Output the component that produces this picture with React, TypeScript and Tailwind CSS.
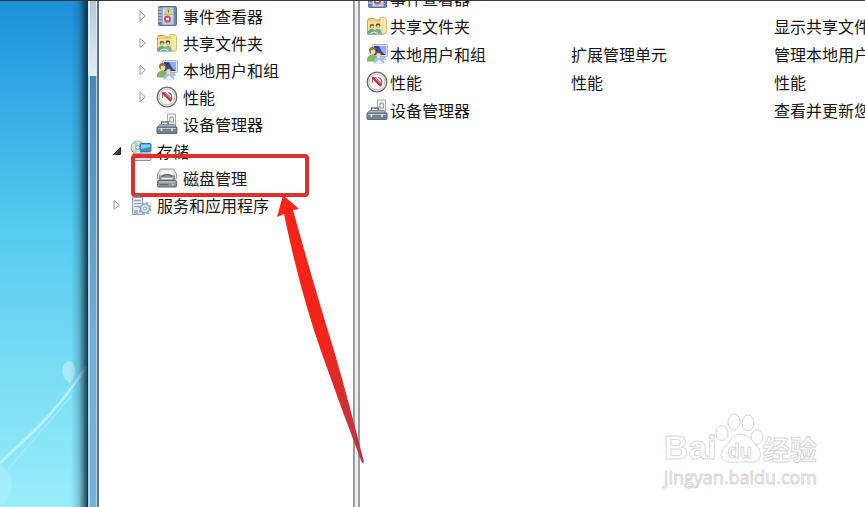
import type {ReactNode} from "react";

type IconName = "event" | "share" | "users" | "perf" | "device" | "storage" | "disk" | "services";

const treeRows: { label: string; icon: IconName; depth: number; state?: "open" | "closed"; marked?: boolean }[] = [
    {label: "事件查看器", icon: "event", depth: 2, state: "closed"},
    {label: "共享文件夹", icon: "share", depth: 2, state: "closed"},
    {label: "本地用户和组", icon: "users", depth: 2, state: "closed"},
    {label: "性能", icon: "perf", depth: 2, state: "closed"},
    {label: "设备管理器", icon: "device", depth: 2},
    {label: "存储", icon: "storage", depth: 1, state: "open"},
    {label: "磁盘管理", icon: "disk", depth: 2, marked: true},
    {label: "服务和应用程序", icon: "services", depth: 1, state: "closed"},
];

const listRows: { name: string; icon: IconName; type: string; description: string }[] = [
    {name: "事件查看器", icon: "event", type: "", description: ""},
    {name: "共享文件夹", icon: "share", type: "", description: "显示共享文件夹"},
    {name: "本地用户和组", icon: "users", type: "扩展管理单元", description: "管理本地用户和组"},
    {name: "性能", icon: "perf", type: "性能", description: "性能"},
    {name: "设备管理器", icon: "device", type: "", description: "查看并更新您的设备"},
];

const drawings: Record<IconName, ReactNode> = {
    event: (
        <>
            <rect x="2.5" y="1.5" width="18" height="19" rx="1" fill="#6f86b4" stroke="#5b6d96"/>
            <rect x="6.5" y="2.5" width="11" height="17" fill="#d3dae4"/>
            <path d="M8 4h9M8 16h9M8 18h9" stroke="#a9b7cb"/>
            <path d="M2 4h4M2 7h4M2 10h4M2 13h4M2 16h4" stroke="#d8dfeb"/>
            <path d="M12.500 3l4 6.500h-8z" fill="#ecd965" stroke="#bda94a" strokeWidth=".7"/>
            <path d="M12.500 5v2.600" stroke="#6f7c33"/>
            <circle cx="11.500" cy="14" r="3.500" fill="#cb4f60"/>
            <path d="M10.300 12.800l2.400 2.400m0-2.400l-2.400 2.400" stroke="#fff" strokeWidth="1.200"/>
        </>
    ),
    share: (
        <>
            <path d="M1.500 5.500l1-2h6l2 1.500h8v14h-17z" fill="#ecd084" stroke="#c6a556"/>
            <path d="M14 2.500h5l1.500 2v14l-6.500 1z" fill="#f8e7ae" stroke="#cfb062" strokeWidth=".8"/>
            <path d="M2 7h15v11H2z" fill="#f6e09a"/>
            <circle cx="6" cy="11" r="2.300" fill="#7a6338"/>
            <circle cx="6.200" cy="12" r="1.500" fill="#edd0a5"/>
            <circle cx="12" cy="10.500" r="2.300" fill="#54523a"/>
            <circle cx="12" cy="11.600" r="1.500" fill="#edd0a5"/>
            <path d="M1.500 19.500c0-4 2-5.500 4.500-5.500s3.500 1.500 4 5.500z" fill="#5fae78"/>
            <path d="M8 19.500c0-4 1.500-6 4-6s3.500 2 4 6z" fill="#78b3a5"/>
            <path d="M4 18.500l4-1.500 4 1.500" stroke="#e4f5ea" fill="none"/>
        </>
    ),
    users: (
        <>
            <rect x="6.500" y="1.500" width="15" height="12" rx="1" fill="#dfe6f2" stroke="#a3b1cb"/>
            <rect x="8" y="3" width="12" height="9" fill="#2f439f"/>
            <path d="M13 3h7v9l-4-3z" fill="#93aee5"/>
            <path d="M14 14h5l1 3h-6z" fill="#b4bfce"/>
            <circle cx="6.500" cy="7.500" r="3.400" fill="#8d7340"/>
            <circle cx="7" cy="9" r="2.400" fill="#eed5ac"/>
            <path d="M.8 18.500c0-5 2.500-7 5.700-7s5 2.500 5 7z" fill="#7fb85e"/>
            <circle cx="12.500" cy="11" r="3" fill="#5c5546"/>
            <circle cx="12.500" cy="12.300" r="2.300" fill="#f0d6b9"/>
            <path d="M7.500 20.500c0-4 2-6 5-6s6 2 6 6z" fill="#a7c2e0"/>
            <path d="M8.500 20.500l4.500-4 4.500 4z" fill="#e6eef8"/>
        </>
    ),
    perf: (
        <>
            <circle cx="11" cy="11" r="9.800" fill="#e9e7e7" stroke="#6e6969" strokeWidth="1.300"/>
            <circle cx="11" cy="11" r="7.800" fill="#fff" stroke="#c0bcbc" strokeWidth=".8"/>
            <path d="M6.500 12V6.500h3l6.500 7" fill="none" stroke="#c9626b" strokeWidth="1.200"/>
            <path d="M6.500 6.500l8.500 8.500" stroke="#b52f3b" strokeWidth="2.200"/>
            <path d="M12 6.500c3 .5 4.500 3 3.500 7.500" fill="none" stroke="#a5535a" strokeWidth="1.200"/>
        </>
    ),
    device: (
        <>
            <rect x="11.500" y="1" width="8" height="12" fill="#f1f3ee" stroke="#a9aea7"/>
            <path d="M14 9V5.500c0-2.200 3.500-2.200 3.500 0V9z" fill="none" stroke="#8fa58a" strokeWidth="1.100"/>
            <path d="M5.500 11.500V9h7v2.500" fill="none" stroke="#687580" strokeWidth="1.300"/>
            <path d="M3.500 11.500h15l2.500 3H1z" fill="#a9b4bd" stroke="#7c8993"/>
            <rect x="1" y="14" width="20" height="6.500" rx="1" fill="#76838e" stroke="#5f6b75"/>
            <path d="M2 15.500h18" stroke="#bdc7ce"/>
            <path d="M5.500 15v3M16 15v3" stroke="#dfe5e8" strokeWidth="1.600"/>
        </>
    ),
    storage: (
        <>
            <rect x="3" y="13" width="18" height="7.500" rx="1" fill="#dcdee1" stroke="#8d9196"/>
            <path d="M4.500 17h10" stroke="#8f969c"/>
            <circle cx="18" cy="17" r="1.300" fill="#67ae6c"/>
            <circle cx="7.500" cy="7.500" r="6.500" fill="#dde2e2" stroke="#98a3a1"/>
            <path d="M7.500 7.500L3 3l4-2zM7.500 7.500l-1 6-4-2z" fill="#b5d0b9"/>
            <circle cx="7.500" cy="7.500" r="2" fill="#fff" stroke="#949b9b"/>
            <rect x="10" y="3.500" width="11" height="8" rx="1" fill="#3593c6" stroke="#2b7aa9"/>
            <path d="M11 4.500h9v2.500l-9 2z" fill="#85cdea"/>
            <path d="M14 12v3h4v-3" fill="#aab8c4"/>
        </>
    ),
    disk: (
        <>
            <path d="M4.500 2h13l3 5v5h-19V7z" fill="#dcdddd" stroke="#9b9e9f"/>
            <path d="M6 3.500h10l1.500 4h-13z" fill="#f4f4f4"/>
            <path d="M3 8.500h16v4.500H3z" fill="#8c9092"/>
            <path d="M6 9.500c2-2.500 8-2.500 10 0" stroke="#55595b" strokeWidth="1.400" fill="none"/>
            <path d="M5.500 11.500h11" stroke="#f0f0f0" strokeWidth="1.600"/>
            <rect x="1.500" y="13.500" width="19" height="6.500" rx="1" fill="#8f9496" stroke="#64696b"/>
            <path d="M3 15h16" stroke="#d2d4d5"/>
            <path d="M4 17.500h8" stroke="#5f6466"/>
            <circle cx="17" cy="17.500" r="1" fill="#b9d2b6"/>
        </>
    ),
    services: (
        <>
            <path d="M5 .5h5V3H5z" fill="#6d757c"/>
            <rect x="2.500" y="3.500" width="10" height="17" fill="#e2e6ea" stroke="#9aa5ae"/>
            <path d="M4 6.500h7M4 9.500h7M4 12.500h6" stroke="#94a3b0" strokeWidth="1.200"/>
            <path d="M4 16h4v4H4z" fill="#a9b9c6"/>
            <circle cx="15" cy="14.500" r="4.400" fill="#dce8f2" stroke="#86a5c2" strokeWidth="1.400"/>
            <circle cx="15" cy="14.500" r="5.600" fill="none" stroke="#86a5c2" strokeWidth="1.800" strokeDasharray="2.200 2.200"/>
            <circle cx="15" cy="14.500" r="1.600" fill="#fff" stroke="#86a5c2"/>
        </>
    ),
};

function Icon({name}: { name: IconName }) {
    return (
        <svg viewBox="0 0 22 22" className="h-[22px] w-[22px] shrink-0" aria-hidden="true">
            {drawings[name]}
        </svg>
    );
}

function Expander({state, label}: { state?: "open" | "closed"; label: string }) {
    if (!state) return <span className="w-4 shrink-0"/>;
    return (
        <button aria-label={label} aria-expanded={state === "open"} className="flex w-4 shrink-0 justify-center">
            <svg viewBox="0 0 12 12" className="h-3 w-3">
                {state === "open"
                    ? <path d="M9.500 2.500v7h-7z" fill="#404040" stroke="#222"/>
                    : <path d="M3 1.500v9L8.500 6z" fill="#fff" stroke="#999"/>}
            </svg>
        </button>
    );
}

// Red box with the arrow pointing at it
function Marker() {
    return (
        <div className="pointer-events-none absolute -top-2.5 left-8 h-[43px] w-[178px] rounded-sm border-4 border-[#dc302e]">
            <svg viewBox="0 0 96 272" className="absolute left-[138px] top-[36px] h-[272px] w-24">
                <defs>
                    <linearGradient id="arrow" x1="0" y1="0" x2="0" y2="1">
                        <stop offset="0" stopColor="#fb2416"/>
                        <stop offset=".55" stopColor="#f4231a"/>
                        <stop offset="1" stopColor="#b53a45"/>
                    </linearGradient>
                </defs>
                <path d="M10 1L26 15L20 16Q41 92 62 160Q77 212 91 268L89 269Q68 214 49 160Q27 98 11 20L4 23Z" fill="url(#arrow)"/>
            </svg>
        </div>
    );
}

function Desktop() {
    return (
        <div className="relative w-[87px] shrink-0 bg-linear-to-b from-[#1c90da] via-[#55cbef] via-45% to-[#98edfa]">
            <svg viewBox="0 0 87 160" className="absolute bottom-0 left-0 h-40 w-full" fill="none">
                <path d="M-2 118L38 80Q64 54 86 20" stroke="#bdf2fa" strokeWidth="2.500"/>
                <path d="M8 122Q40 86 72 48" stroke="#a9edf8" strokeWidth="1.500" opacity=".7"/>
                <path d="M70 36c-8-5-10-12-6-19 6-7 12 0 11 9-1 5-3 8-5 10z" fill="#a9e8f5"/>
                <path d="M0 118q14 6 11 27-4 12-11 13z" fill="#b9f4fb" opacity=".4"/>
            </svg>
            <div className="absolute inset-y-0 right-0 w-4 bg-linear-to-r from-transparent via-[#17506f]/25 to-[#08202c]/80"/>
        </div>
    );
}

function Watermark() {
    return (
        <div className="pointer-events-none absolute bottom-4 right-12 text-white [-webkit-text-stroke:1px_#d8d8d8]">
            <div className="flex h-[50px] items-end font-bold">
                <span className="font-['Liberation_Sans',sans-serif] text-[34px] leading-8">Bai</span>
                <span className="relative h-[50px] w-[46px]">
                    <svg viewBox="0 0 46 50" className="h-full w-full overflow-visible" fill="#fff" stroke="#d4d4d4">
                        <ellipse cx="5" cy="20" rx="6" ry="7.500"/>
                        <ellipse cx="17" cy="9" rx="6" ry="8"/>
                        <ellipse cx="31" cy="10" rx="6" ry="8"/>
                        <ellipse cx="40" cy="24" rx="6" ry="7.500"/>
                        <path d="M23 21c-7 0-9 7-14 12-7 6-7 15 3 16 7 1 15-1 21 0 11 1 13-9 7-16-5-6-9-12-17-12z"/>
                    </svg>
                    <span className="absolute inset-x-0 bottom-0 text-center font-['Liberation_Sans',sans-serif] text-xl leading-6">du</span>
                </span>
                <span className="text-[27px] leading-7">经验</span>
            </div>
            <div className="text-center font-['Open_Sans',sans-serif] text-lg leading-7">jingyan.baidu.com</div>
        </div>
    );
}

export default function App() {
    return (
        <div className="relative flex h-screen flex-col overflow-hidden bg-white font-['Noto_Sans_CJK_SC',sans-serif] text-base text-[#151515]">
            <div className="h-px shrink-0 bg-[#35383f]"/>
            <div className="flex min-h-0 flex-1">
                <Desktop/>
                <div className="flex w-[10px] shrink-0 flex-col border-l border-[#17364a]">
                    <div className="h-[75px] border-l-2 border-r border-[#d9edf7] bg-linear-to-b from-[#b9c9d9] to-[#e2edf4]"/>
                    <div className="flex-1 border-l-2 border-r border-[#a8d8ef] bg-linear-to-b from-[#4c88b4] via-[#76acd2] via-60% to-[#74b3d5]"/>
                </div>
                <nav className="relative z-10 w-64 shrink-0 border-l-2 border-[#667083] pt-px">
                    <ul>
                        {treeRows.map((row) => (
                            <li
                                key={row.label}
                                className={`relative flex h-[27px] items-center gap-[5px] whitespace-nowrap ${row.depth === 2 ? "pl-9" : "pl-2.5"}`}
                            >
                                <Expander state={row.state} label={row.label}/>
                                <Icon name={row.icon}/>
                                <span>{row.label}</span>
                                {row.marked && <Marker/>}
                            </li>
                        ))}
                    </ul>
                </nav>
                <div className="w-[7px] shrink-0 border-x-2 border-[#9a9ba3] bg-[#eeeef6]"/>
                <main className="min-w-0 flex-1 overflow-hidden">
                    <table className="-mt-[17px] w-full table-fixed whitespace-nowrap">
                        <colgroup>
                            <col className="w-[211px]"/>
                            <col className="w-[203px]"/>
                            <col/>
                        </colgroup>
                        <tbody>
                            {listRows.map((row) => (
                                <tr key={row.name} className="h-7">
                                    <td className="p-0 pl-1.5">
                                        <div className="flex items-center gap-0.5">
                                            <Icon name={row.icon}/>
                                            <span>{row.name}</span>
                                        </div>
                                    </td>
                                    <td className="p-0">{row.type}</td>
                                    <td className="p-0">{row.description}</td>
                                </tr>
                            ))}
                        </tbody>
                    </table>
                </main>
            </div>
            <Watermark/>
        </div>
    );
}
